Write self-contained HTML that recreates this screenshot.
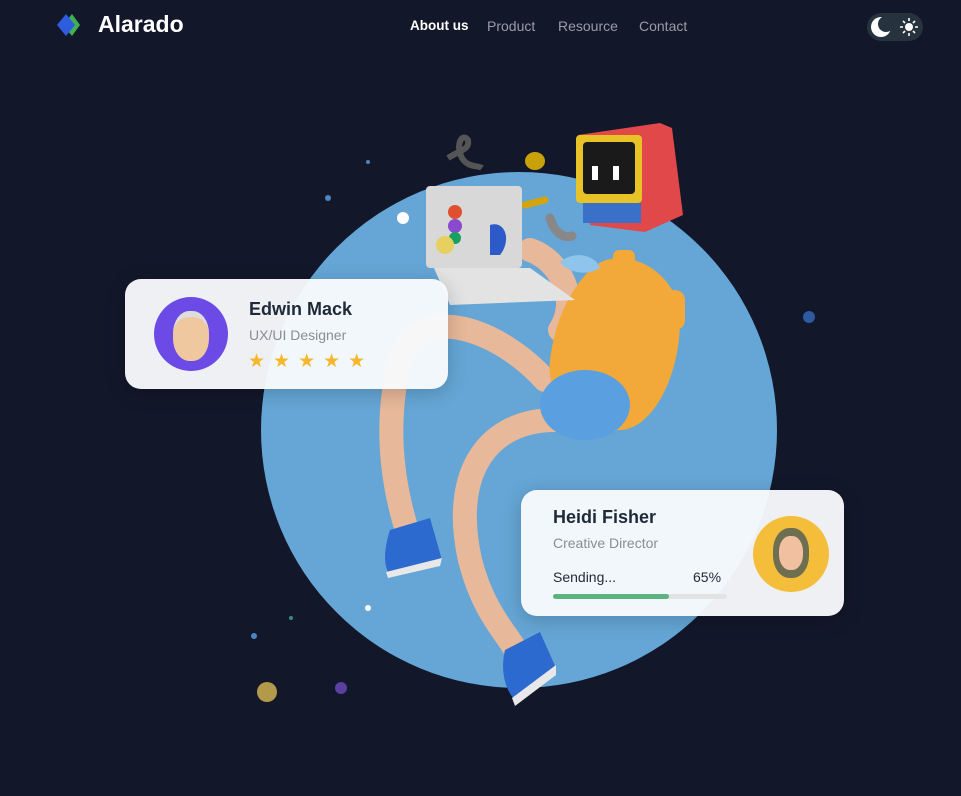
<!DOCTYPE html>
<html><head><meta charset="utf-8"><style>
body{margin:0;width:961px;height:796px;background:#12172a;font-family:"Liberation Sans",sans-serif;overflow:hidden;position:relative}
.nav{position:absolute;top:18px;font-size:14px;color:#9a9ca5}
.card{position:absolute;background:rgba(248,250,252,.96);border-radius:16px;box-shadow:0 4px 20px rgba(0,0,0,.2)}
.name{font-weight:bold;font-size:18px;color:#1f2937;position:absolute}
.sub{font-size:14px;color:#8a8d93;position:absolute}
</style></head><body>
<svg style="position:absolute;left:0;top:0" width="961" height="796">
<polygon points="63,25 72,14 80,25 72,36" fill="#3fb154"/>
<polygon points="57,25 66,14 75,25 66,36" fill="#2f5be0"/>
<circle cx="519" cy="430" r="258" fill="#65a6d6"/>
<circle cx="403" cy="218" r="6" fill="#fff"/>
<circle cx="328" cy="198" r="3" fill="#4a86c4"/>
<circle cx="368" cy="162" r="2" fill="#4a86c4"/>
<circle cx="809" cy="317" r="6" fill="#2e5aa0"/>
<circle cx="368" cy="608" r="3" fill="#fff"/>
<circle cx="254" cy="636" r="3" fill="#4a86c4"/>
<circle cx="291" cy="618" r="2" fill="#3b8a7a"/>
<circle cx="267" cy="692" r="10" fill="#b39a4a"/>
<circle cx="341" cy="688" r="6" fill="#5a3ea0"/>
<polygon points="578,135 660,123 672,128 683,215 645,232 590,225" fill="#e0484a"/>
<rect x="576" y="135" width="66" height="68" rx="4" fill="#e7c328"/>
<rect x="583" y="142" width="52" height="52" rx="4" fill="#1a1a1a"/>
<rect x="592" y="166" width="6" height="14" fill="#fff"/><rect x="613" y="166" width="6" height="14" fill="#fff"/>
<rect x="583" y="203" width="58" height="20" fill="#3a70c8"/>
<path d="M448,158 C460,150 470,150 468,140 C462,132 455,145 462,158 C468,168 478,165 482,168" stroke="#555" stroke-width="6" fill="none"/>
<ellipse cx="535" cy="161" rx="10" ry="9" fill="#c9a10a"/>
<path d="M525,205 L545,200" stroke="#d4a50a" stroke-width="7" stroke-linecap="round"/>
<path d="M550,218 C555,235 565,238 572,236" stroke="#888" stroke-width="9" fill="none" stroke-linecap="round"/>
<g stroke="#e8b89a" stroke-width="24" fill="none" stroke-linecap="round">
<path d="M545,380 C500,330 420,300 400,360 C385,420 390,480 410,540"/>
<path d="M555,420 C490,420 450,470 470,560 C485,620 515,640 520,660"/>
<path d="M660,330 C670,380 640,410 610,420"/>
<path d="M530,250 C560,260 580,300 560,330"/>
</g>
<path d="M590,270 C620,240 680,270 680,320 C680,380 650,430 620,430 C580,430 545,400 550,360 C555,320 570,290 590,270Z" fill="#f2a93a"/>
<rect x="613" y="250" width="22" height="24" rx="6" fill="#f2a93a"/>
<rect x="650" y="290" width="35" height="40" rx="10" fill="#f2a93a"/>
<ellipse cx="585" cy="405" rx="45" ry="35" fill="#5aa0e0"/>
<rect x="426" y="186" width="96" height="82" rx="4" fill="#d8d8d8"/>
<polygon points="434,268 530,268 575,300 450,305" fill="#e3e3e3"/>
<circle cx="455" cy="212" r="7" fill="#e05030"/><circle cx="455" cy="226" r="7" fill="#8a4ad0"/><circle cx="455" cy="238" r="6" fill="#17a060"/>
<path d="M490,225 C505,220 512,240 500,255 L490,255Z" fill="#2c5ac8"/>
<circle cx="445" cy="245" r="9" fill="#e7d060"/>
<path d="M560,262 C575,250 595,255 600,268 C590,275 570,275 560,262Z" fill="#8fc4ec"/>
<path d="M390,530 L430,518 L442,560 L390,575 C382,565 385,545 390,530Z" fill="#2d6ad0"/>
<path d="M386,572 L442,558 L440,566 L388,578Z" fill="#e8e8e8"/>
<path d="M505,650 L540,632 L556,668 L515,700 C505,690 500,670 505,650Z" fill="#2d6ad0"/>
<path d="M512,698 L556,665 L556,675 L515,706Z" fill="#e8e8e8"/>
<rect x="867" y="13" width="56" height="28" rx="14" fill="#27323f"/>
<circle cx="881" cy="27" r="10" fill="#fff"/><circle cx="886" cy="24" r="8" fill="#27323f"/>
<circle cx="909" cy="27" r="4" fill="#fff"/>
<g stroke="#fff" stroke-width="1.6"><path d="M909,18v3M909,33v3M900,27h3M915,27h3M903,21l2,2M913,31l2,2M903,33l2,-2M913,23l2,-2"/></g>
</svg>
<div style="position:absolute;left:98px;top:11px;font-size:23px;font-weight:bold;color:#fff">Alarado</div>
<div class="nav" style="left:410px;color:#fff;font-weight:bold;font-size:13.5px">About us</div>
<div class="nav" style="left:487px">Product</div>
<div class="nav" style="left:558px">Resource</div>
<div class="nav" style="left:639px">Contact</div>
<div class="card" style="left:125px;top:279px;width:323px;height:110px">
<div style="position:absolute;left:29px;top:18px;width:74px;height:74px;border-radius:50%;background:#6c4ae6"></div>
<div style="position:absolute;left:48px;top:32px;width:36px;height:44px;border-radius:45%;background:#f0c8a0;border-top:6px solid #ddd"></div>
<div class="name" style="left:124px;top:20px">Edwin Mack</div>
<div class="sub" style="left:124px;top:48px">UX/UI Designer</div>
<div style="position:absolute;left:123px;top:71px;color:#f5b72c;font-size:19px;letter-spacing:8px">★★★★★</div>
</div>
<div class="card" style="left:521px;top:490px;width:323px;height:126px">
<div class="name" style="left:32px;top:17px">Heidi Fisher</div>
<div class="sub" style="left:32px;top:45px">Creative Director</div>
<div style="position:absolute;left:32px;top:79px;font-size:14px;color:#1f2937">Sending...</div>
<div style="position:absolute;left:172px;top:79px;font-size:14px;color:#1f2937">65%</div>
<div style="position:absolute;left:32px;top:104px;width:174px;height:5px;border-radius:3px;background:#e3e3e3"><div style="width:116px;height:5px;border-radius:3px;background:#5bb380"></div></div>
<div style="position:absolute;left:232px;top:26px;width:76px;height:76px;border-radius:50%;background:#f5be3a"></div>
<div style="position:absolute;left:252px;top:38px;width:36px;height:50px;border-radius:45%;background:#6e6e50"></div>
<div style="position:absolute;left:258px;top:46px;width:24px;height:34px;border-radius:45%;background:#f0c0a0"></div>
</div>
</body></html>
